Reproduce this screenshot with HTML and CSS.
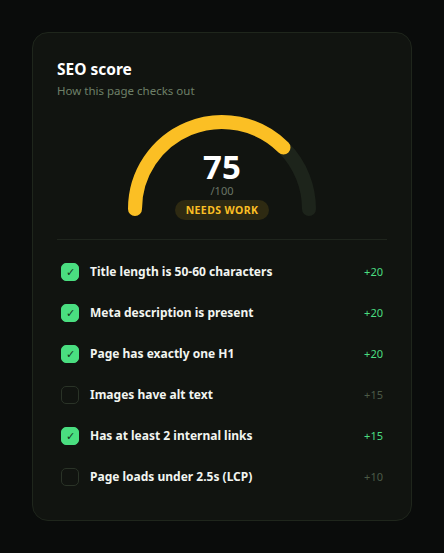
FILE: index.html
```html
<!DOCTYPE html>
<html lang="en">

<head>
    <meta charset="UTF-8">
    <meta name="viewport" content="width=device-width, initial-scale=1.0">
    <link rel="stylesheet" href="styles.css">
</head>

<body>
    <div class="seo-card">
        <h1 class="seo-title">SEO score</h1>
        <p class="seo-sub">How this page checks out</p>

        <div class="gauge">
            <svg class="gauge-arc" width="190" height="110" viewBox="0 0 190 110">
                <path d="M 8 95 A 87 87 0 0 1 182 95" fill="none" stroke="#1d241b" stroke-width="14" stroke-linecap="round" />
                <path d="M 8 95 A 87 87 0 0 1 156.5 33.5" fill="none" stroke="#fbbf24" stroke-width="14" stroke-linecap="round" />
            </svg>
            <div class="gauge-center">
                <div class="score">75</div>
                <div class="score-max">/100</div>
                <div class="badge">Needs work</div>
            </div>
        </div>

        <ul class="checks">
            <li class="check done">
                <span class="box">&#10003;</span>
                <span class="label">Title length is 50-60 characters</span>
                <span class="pts">+20</span>
            </li>
            <li class="check done">
                <span class="box">&#10003;</span>
                <span class="label">Meta description is present</span>
                <span class="pts">+20</span>
            </li>
            <li class="check done">
                <span class="box">&#10003;</span>
                <span class="label">Page has exactly one H1</span>
                <span class="pts">+20</span>
            </li>
            <li class="check">
                <span class="box"></span>
                <span class="label">Images have alt text</span>
                <span class="pts">+15</span>
            </li>
            <li class="check done">
                <span class="box">&#10003;</span>
                <span class="label">Has at least 2 internal links</span>
                <span class="pts">+15</span>
            </li>
            <li class="check">
                <span class="box"></span>
                <span class="label">Page loads under 2.5s (LCP)</span>
                <span class="pts">+10</span>
            </li>
        </ul>
    </div>
</body>

</html>
```

FILE: styles.css
```css
body {
    margin: 0;
    min-height: 553px;
    background: #0a0c0b;
    font-family: "Noto Sans", "Open Sans", sans-serif;
    color: #f2f5f0;
}

.seo-card {
    width: 380px;
    box-sizing: border-box;
    margin: 32px 0 0 32px;
    padding: 26px 24px 23px;
    background: #111410;
    border: 1px solid #1f261c;
    border-radius: 16px;
}

.seo-title {
    margin: 0;
    font-size: 15.5px;
    font-weight: 700;
    line-height: 21px;
    color: #ffffff;
}

.seo-sub {
    margin: 3px 0 0;
    font-size: 11.5px;
    line-height: 15px;
    color: #6e8068;
}

.gauge {
    position: relative;
    width: 190px;
    height: 110px;
    margin: 16px auto 0;
}

.gauge-arc {
    display: block;
}

/* number + badge sit over the arc */
.gauge-center {
    position: absolute;
    left: 0;
    right: 0;
    top: 35px;
    display: flex;
    flex-direction: column;
    align-items: center;
}

.score {
    font-size: 33px;
    font-weight: 700;
    line-height: 35px;
    color: #ffffff;
}

.score-max {
    font-size: 11px;
    line-height: 13px;
    color: #6a7566;
}

.badge {
    margin-top: 3px;
    padding: 0 11px;
    height: 20px;
    line-height: 20px;
    border-radius: 10px;
    background: #2e2a12;
    color: #fbbf24;
    font-size: 10.5px;
    font-weight: 700;
    text-transform: uppercase;
    letter-spacing: 0.4px;
}

.checks {
    list-style: none;
    margin: 15px 0 0;
    padding: 11px 0 0;
    border-top: 1px solid #1f251d;
}

.check {
    display: flex;
    align-items: center;
    height: 41px;
    padding: 0 4px;
}

.box {
    flex: 0 0 auto;
    width: 18px;
    height: 18px;
    box-sizing: border-box;
    border: 1px solid #2a3327;
    border-radius: 5px;
    display: flex;
    align-items: center;
    justify-content: center;
    font-size: 11px;
    color: #14361f;
}

.done .box {
    background: #4ade80;
    border-color: #4ade80;
}

.label {
    flex: 1;
    margin-left: 11px;
    font-size: 12px;
    font-weight: 700;
    color: #f2f5f0;
}

.pts {
    font-size: 11px;
    color: #4b5a47;
}

.done .pts {
    color: #4ade80;
}
```
